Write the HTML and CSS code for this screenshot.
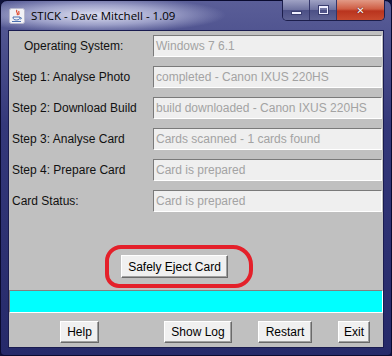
FILE: index.html
```html
<!DOCTYPE html>
<html lang="en">
<head>
    <meta charset="UTF-8">
    <title>STICK - Dave Mitchell - 1.09</title>
    <link rel="stylesheet" href="styles.css">
</head>
<body>
    <div class="window">
        <div class="titlebar">
            <svg class="app-icon" width="16" height="16" viewBox="0 0 16 16">
                <rect x="0.5" y="0.5" width="15" height="15" rx="2" fill="#f2f2f6" stroke="#b8b8cc"/>
                <path d="M8 2 C6 4 10 5 8 7 M10 3 C9 4.5 11 5 9.5 7" fill="none" stroke="#e0452a" stroke-width="1.2"/>
                <path d="M4 9 H11 C11 11 10 12 7.5 12 C5 12 4 11 4 9 Z" fill="none" stroke="#4a6fb0" stroke-width="1"/>
                <path d="M11 9.5 C13 9.5 13 11 11 11" fill="none" stroke="#4a6fb0" stroke-width="1"/>
                <path d="M3 13.5 H12" stroke="#4a6fb0" stroke-width="1"/>
            </svg>
            <span class="title">STICK - Dave Mitchell - 1.09</span>
            <div class="controls">
                <div class="ctl ctl-min"><span class="min-glyph"></span></div>
                <div class="ctl ctl-max"><span class="max-glyph"></span></div>
                <div class="ctl ctl-close">&#x2715;</div>
            </div>
        </div>

        <div class="client">
            <div class="form">
                <label class="os-label">Operating System:</label>
                <div class="field">Windows 7 6.1</div>

                <label>Step 1: Analyse Photo</label>
                <div class="field">completed - Canon IXUS 220HS</div>

                <label>Step 2: Download Build</label>
                <div class="field">build downloaded - Canon IXUS 220HS</div>

                <label>Step 3: Analyse Card</label>
                <div class="field">Cards scanned - 1 cards found</div>

                <label>Step 4: Prepare Card</label>
                <div class="field">Card is prepared</div>

                <label>Card Status:</label>
                <div class="field">Card is prepared</div>
            </div>

            <div class="eject-ring">
                <button class="btn eject">Safely Eject Card</button>
            </div>

            <div class="status-bar"></div>

            <div class="button-row">
                <button class="btn help">Help</button>
                <button class="btn showlog">Show Log</button>
                <button class="btn restart">Restart</button>
                <button class="btn exit">Exit</button>
            </div>
        </div>
    </div>
</body>
</html>
```

FILE: styles.css
```css
body {
    margin: 0;
    background: #10123c;
    font-family: 'Liberation Sans', Arial, sans-serif;
}
.window {
    width: 392px;
    height: 356px;
    box-sizing: border-box;
    border: 1px solid #0a0b30;
    border-radius: 7px 7px 4px 4px;
    background: linear-gradient(180deg, #5a5e98 0%, #34387a 35%, #262a6a 100%);
    padding: 0 7px 6px 7px;
}
.titlebar {
    height: 29px;
    display: flex;
    align-items: flex-start;
    background: radial-gradient(ellipse 130px 18px at 95px 14px, rgba(232,234,248,0.92) 0%, rgba(205,208,236,0.6) 55%, rgba(200,205,235,0) 100%);
    margin: 0 -7px;
    padding: 0 7px;
}
.app-icon {
    margin-top: 7px;
    margin-left: 1px;
    flex: none;
}
.title {
    font-family: 'Open Sans', sans-serif;
    font-size: 11.5px;
    color: #000;
    margin-left: 6px;
    margin-top: 6px;
    line-height: 17px;
}
.controls {
    margin-left: auto;
    margin-right: -1px;
    margin-top: -1px;
    display: flex;
    height: 20px;
    border: 1px solid #1c1e4c;
    border-top: none;
    border-radius: 0 0 5px 5px;
    overflow: hidden;
}
.ctl {
    height: 20px;
    display: flex;
    align-items: center;
    justify-content: center;
    box-sizing: border-box;
}
.ctl-min, .ctl-max {
    width: 27px;
    background: linear-gradient(180deg, #9fa2c4 0%, #6e72a0 48%, #4c5086 52%, #5e6294 100%);
    border-right: 1px solid #33366a;
}
.min-glyph {
    width: 9px;
    height: 2px;
    background: #eef;
    border: 1px solid #3a3e70;
    margin-top: 6px;
}
.max-glyph {
    width: 7px;
    height: 5px;
    border: 1px solid #eef;
    border-top-width: 2px;
    outline: 1px solid #3a3e70;
}
.ctl-close {
    width: 47px;
    background: linear-gradient(180deg, #e29a86 0%, #cf5e44 45%, #b9341e 55%, #c84a2e 100%);
    color: #fff;
    font-family: 'DejaVu Sans', sans-serif;
    font-weight: bold;
    font-size: 10px;
    text-shadow: 0 0 1px #5a1008, 0 0 1px #5a1008;
}
.client {
    background: #c0c0c0;
    height: 318px;
    border: 1px solid #1a1c50;
    box-sizing: border-box;
}
.form {
    display: grid;
    grid-template-columns: 144px 229px;
    row-gap: 9px;
    padding-top: 4px;
}
.form label {
    font-size: 12px;
    color: #111;
    padding-left: 3px;
    line-height: 22px;
}
.form .os-label {
    padding-left: 15px;
}
.field {
    height: 22px;
    box-sizing: border-box;
    background: #efefef;
    border: 1px solid;
    border-color: #7a7a7a #ffffff #ffffff #7a7a7a;
    color: #a3a3a3;
    font-size: 12px;
    line-height: 20px;
    padding-left: 2px;
    white-space: nowrap;
    overflow: hidden;
}
.eject-ring {
    width: 148px;
    height: 43px;
    box-sizing: border-box;
    margin: 33px 0 0 96px;
    border: 4px solid #e4202a;
    border-radius: 16px 20px 18px 14px;
    padding: 6px 0 0 12px;
}
.btn {
    font-family: 'Liberation Sans', Arial, sans-serif;
    font-size: 12px;
    color: #000;
    background: #f0f0f0;
    border: 1px solid;
    border-color: #ffffff #6a6a6a #6a6a6a #ffffff;
    box-shadow: inset -1px -1px 0 #a0a0a0;
    padding: 0;
    height: 23px;
    box-sizing: border-box;
}
.eject {
    width: 107px;
}
.status-bar {
    height: 23px;
    box-sizing: border-box;
    margin: 2px 0 0 0;
    border: 1px solid;
    border-color: #808080 #ffffff #ffffff #808080;
    background: #00ffff;
}
.button-row {
    display: flex;
    gap: 26px;
    padding-left: 51px;
    margin-top: 8px;
}
.button-row .btn {
    height: 22px;
}
.help { width: 39px; }
.showlog { width: 68px; margin-left: 39px; }
.restart { width: 54px; }
.exit { width: 32px; }
```
